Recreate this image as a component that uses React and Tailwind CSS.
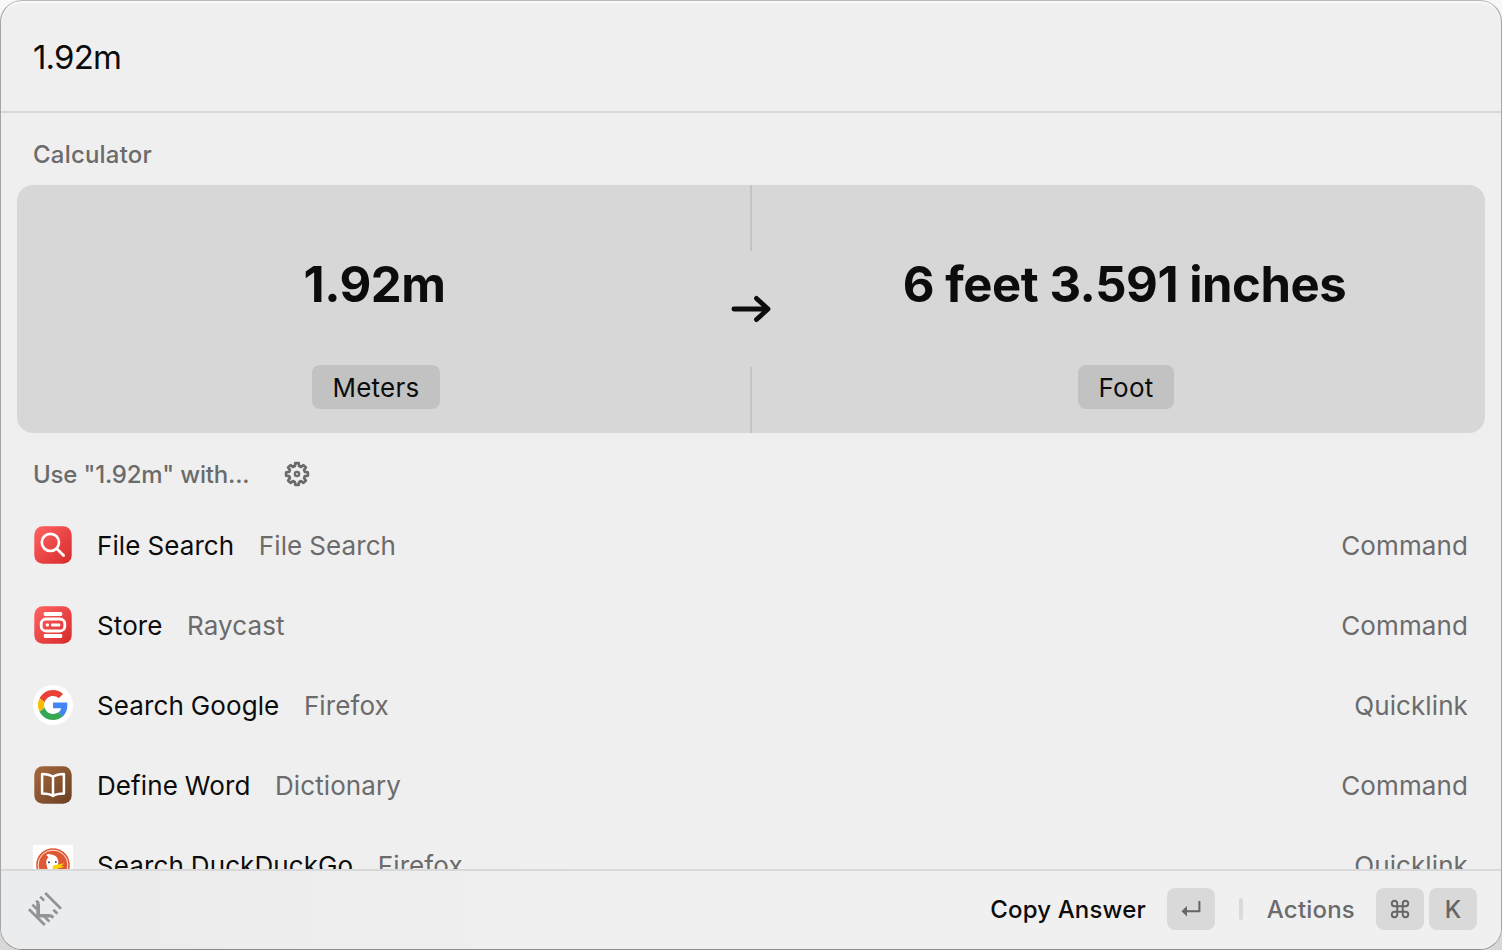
import React from "react";
import { Command } from "lucide-react";

const gearPath = (() => {
  const pts = [];
  const teeth = 8;
  const at = (r, deg) => {
    const a = (deg * Math.PI) / 180;
    return `${(13 + r * Math.cos(a)).toFixed(2)} ${(13 + r * Math.sin(a)).toFixed(2)}`;
  };
  for (let i = 0; i < teeth; i++) {
    const c = i * 45 - 90;
    pts.push(at(8.2, c - 15), at(11, c - 9), at(11, c + 9), at(8.2, c + 15));
  }
  return `M${pts.join("L")}Z`;
})();

function GearIcon() {
  return (
    <svg className="size-[26px]" viewBox="0 0 26 26" fill="none" stroke="currentColor" strokeWidth="2.7" strokeLinejoin="round">
      <path d={gearPath} />
      <circle cx="13" cy="13" r="2.1" strokeWidth="2.4" />
    </svg>
  );
}

function ArrowIcon() {
  return (
    <svg className="h-[28px] w-[40px] shrink-0" viewBox="0 0 40 28" fill="none" stroke="#0c0c0c" strokeWidth="4.8" strokeLinecap="round" strokeLinejoin="round">
      <path d="M2.9 14H37M25.5 3.4L37 14L25.5 24.6" />
    </svg>
  );
}

function FileSearchIcon() {
  return (
    <svg className="size-10" viewBox="0 0 40 40" fill="none">
      <defs>
        <linearGradient id="red-a" x1="0" y1="0" x2="1" y2="1">
          <stop offset="0" stopColor="#ff6363" />
          <stop offset="1" stopColor="#d72a2a" />
        </linearGradient>
      </defs>
      <rect x="1.3" y="1.3" width="37.4" height="37.4" rx="8.5" fill="url(#red-a)" />
      <circle cx="17.4" cy="17.4" r="8.6" stroke="#fff" strokeWidth="2.7" />
      <path d="M23.8 23.8L30.6 30.6" stroke="#fff" strokeWidth="2.8" strokeLinecap="round" />
    </svg>
  );
}

function StoreIcon() {
  return (
    <svg className="size-10" viewBox="0 0 40 40" fill="none">
      <defs>
        <linearGradient id="red-b" x1="0" y1="0" x2="1" y2="1">
          <stop offset="0" stopColor="#ff6363" />
          <stop offset="1" stopColor="#d72a2a" />
        </linearGradient>
      </defs>
      <rect x="1.3" y="1.3" width="37.4" height="37.4" rx="8.5" fill="url(#red-b)" />
      <rect x="10.7" y="7" width="18.6" height="4" rx="1.4" fill="#fff" />
      <rect x="10.7" y="29" width="18.6" height="4" rx="1.4" fill="#fff" />
      <rect x="8.2" y="14" width="23.6" height="12" rx="4.8" stroke="#fff" strokeWidth="2.8" />
      <rect x="12.8" y="18.6" width="3.2" height="2.8" rx="1" fill="#fff" />
      <rect x="18" y="18.6" width="9.4" height="2.8" rx="1.1" fill="#fff" />
    </svg>
  );
}

function GoogleIcon() {
  return (
    <svg className="size-10" viewBox="0 0 40 40">
      <circle cx="20" cy="20" r="20" fill="#fff" />
      <g transform="translate(5 5) scale(0.625)">
        <path fill="#EA4335" d="M24 9.5c3.54 0 6.71 1.22 9.21 3.6l6.85-6.85C35.9 2.38 30.47 0 24 0 14.62 0 6.51 5.38 2.56 13.22l7.98 6.19C12.43 13.72 17.74 9.5 24 9.5z" />
        <path fill="#4285F4" d="M46.98 24.55c0-1.57-.15-3.09-.38-4.55H24v9.02h12.94c-.58 2.96-2.26 5.48-4.78 7.18l7.73 6c4.51-4.18 7.09-10.36 7.09-17.65z" />
        <path fill="#FBBC05" d="M10.53 28.59c-.48-1.45-.76-2.99-.76-4.59s.27-3.14.76-4.59l-7.98-6.19C.92 16.46 0 20.12 0 24c0 3.88.92 7.54 2.56 10.78l7.97-6.19z" />
        <path fill="#34A853" d="M24 48c6.48 0 11.93-2.13 15.89-5.81l-7.73-6c-2.15 1.45-4.92 2.3-8.16 2.3-6.26 0-11.57-4.22-13.47-9.91l-7.98 6.19C6.51 42.62 14.62 48 24 48z" />
      </g>
    </svg>
  );
}

function DictionaryIcon() {
  return (
    <svg className="size-10" viewBox="0 0 40 40" fill="none">
      <defs>
        <linearGradient id="brown" x1="0" y1="0" x2="1" y2="1">
          <stop offset="0" stopColor="#a5683e" />
          <stop offset="1" stopColor="#6b4023" />
        </linearGradient>
      </defs>
      <rect x="1.3" y="1.3" width="37.4" height="37.4" rx="8.5" fill="url(#brown)" />
      <path d="M20 11.8C17.2 9.8 13.2 9 9.1 9V28.6C13.2 28.6 17.2 29.2 20 31C22.8 29.2 26.8 28.6 30.9 28.6V9C26.8 9 22.8 9.8 20 11.8ZM20 11.8V31" stroke="#fff" strokeWidth="2.5" strokeLinejoin="round" />
    </svg>
  );
}

function DuckIcon() {
  return (
    <svg className="size-10" viewBox="0 0 40 40" fill="none">
      <rect width="40" height="40" fill="#fff" />
      <circle cx="20" cy="20" r="16.8" fill="#de5833" />
      <circle cx="20" cy="20" r="14.9" stroke="#fff" strokeWidth="0.9" />
      <path d="M13.2 10.2C14.2 9 16 8.8 17.3 9.6C21.5 9.6 25 12 25.3 16.5C25.5 19 24.5 21 24 24L25 34H17.5C16 28 13.4 21 13.2 17.5C13.1 15 14.2 13.2 15.6 12.4C15 11.5 14.2 10.8 13.2 10.2Z" fill="#fff" />
      <circle cx="16" cy="17.3" r="1.1" fill="#2d4f8e" />
      <circle cx="22.8" cy="17" r="1" fill="#2d4f8e" />
      <path d="M19.8 21.2C21 19.6 25 19.8 30.5 18.2C31.3 18.4 30 19.8 28 20.5C26.8 21 30 21 31 21.2C29.8 22.8 25 23.6 20.5 24C19.4 23.3 19.3 22 19.8 21.2Z" fill="#fdd20a" />
    </svg>
  );
}

function RaycastMark() {
  return (
    <svg className="size-[34px]" viewBox="0 0 34 34" fill="none">
      <path
        d="M1 17.2L16.8 33M17.2 1L33 16.8M4.4 12.6L9.4 17.6M8.2 8.6L11 11.4M12.2 4.6L16.2 8.6M21.4 29.6L16.4 24.6M25.4 25.8L22.6 23M29.4 21.8L25.4 17.8"
        stroke="#929394"
        strokeWidth="2.7"
      />
      <path d="M8.3 8.8L12 12V22H22L25.2 25.4H18L8.3 25.4Z" fill="#929394" />
    </svg>
  );
}

function ReturnIcon() {
  return (
    <svg className="h-4 w-5" viewBox="0 0 20 16" fill="none">
      <path d="M18.4 0V10.3H4" stroke="#666" strokeWidth="2" />
      <path d="M0.5 10.3L6 5V15.6Z" fill="#666" />
    </svg>
  );
}

const rows = [
  { icon: FileSearchIcon, title: "File Search", source: "File Search", kind: "Command" },
  { icon: StoreIcon, title: "Store", source: "Raycast", kind: "Command" },
  { icon: GoogleIcon, title: "Search Google", source: "Firefox", kind: "Quicklink" },
  { icon: DictionaryIcon, title: "Define Word", source: "Dictionary", kind: "Command" },
  { icon: DuckIcon, title: "Search DuckDuckGo", source: "Firefox", kind: "Quicklink" },
];

function ResultRow({ icon: Icon, title, source, kind }) {
  return (
    <li className="flex h-20 shrink-0 items-center pr-[33px] pl-8 text-[26px] tracking-[0.1px] [word-spacing:-0.5px]">
      <Icon />
      <span className="ml-6 text-[#0c0c0c]">{title}</span>
      <span className="ml-[24.5px] text-[#6b6b6b]">{source}</span>
      <span className="ml-auto text-[#6b6b6b]">{kind}</span>
    </li>
  );
}

function Quantity({ value, unit }) {
  return (
    <div className="flex flex-1 flex-col items-center pt-[68px]">
      <div className="pr-[3px] text-[49px] leading-[64px] font-bold tracking-[-0.45px] whitespace-nowrap">{value}</div>
      <div className="mt-12 flex h-11 items-center rounded-lg bg-[#c2c2c2] px-5 text-[26px] tracking-[0.25px]">{unit}</div>
    </div>
  );
}

function Key({ children }) {
  return <kbd className="flex h-[42px] w-12 items-center justify-center rounded-lg bg-[#d9d9d9] font-['Inter',sans-serif] text-2xl text-[#666]">{children}</kbd>;
}

export default function App() {
  return (
    <div className="h-[950px] w-[1502px] overflow-hidden bg-linear-to-b from-[#f8f8f8] to-[#d8d8d8] font-['Inter',sans-serif] text-[#0c0c0c]">
      <div className="flex h-full flex-col overflow-hidden rounded-[22px] border border-t-[#b9b9b9] border-r-[#a5a5a5] border-b-[#8c8c8c] border-l-[#a5a5a5] bg-[#efefef] shadow-[inset_0_2px_1px_#fafafa]">
        <header className="flex h-[112px] shrink-0 items-center border-b-2 border-[#d8d8d8] px-8 pt-[3px] text-[33px] tracking-[-0.8px]">1.92m</header>
        <main className="flex min-h-0 flex-1 flex-col overflow-hidden">
          <h2 className="flex h-[72px] shrink-0 items-center px-8 pt-3 text-2xl font-medium tracking-[0.2px] text-[#6b6b6b]">Calculator</h2>
          <section className="mx-4 flex h-[248px] shrink-0 rounded-2xl bg-[#d7d7d7]">
            <Quantity value="1.92m" unit="Meters" />
            <div className="flex w-8 shrink-0 flex-col items-center justify-between">
              <div className="h-[66px] w-0.5 bg-[#c3c3c3]" />
              <ArrowIcon />
              <div className="h-[66px] w-0.5 bg-[#c3c3c3]" />
            </div>
            <Quantity value="6 feet 3.591 inches" unit="Foot" />
          </section>
          <h2 className="flex h-[72px] shrink-0 items-center gap-[35px] px-8 pt-2.5 text-2xl font-medium tracking-[-0.18px] text-[#6b6b6b]">
            <span className="pt-0.5">Use "1.92m" with...</span>
            <GearIcon />
          </h2>
          <ul className="flex flex-col">
            {rows.map((row) => (
              <ResultRow key={row.title} {...row} />
            ))}
          </ul>
        </main>
        <footer className="flex h-20 shrink-0 items-center border-t-2 border-[#d8d8d8] bg-linear-to-r from-[#eaecee] via-[#ececed] via-10% to-[#f0f0f0] to-40% pr-6 pb-0.5 pl-[27px] text-2xl font-medium tracking-[0.15px]">
          <RaycastMark />
          <span className="ml-auto pt-0.5">Copy Answer</span>
          <div className="ml-[21px]"><Key><ReturnIcon /></Key></div>
          <div className="ml-6 h-[22px] w-1 rounded-full bg-[#dadada]" />
          <span className="ml-6 pt-0.5 tracking-[0.2px] text-[#6b6b6b]">Actions</span>
          <div className="ml-[21px] flex gap-[5px]">
            <Key><Command size={22} strokeWidth={2.1} /></Key>
            <Key><span className="pt-0.5">K</span></Key>
          </div>
        </footer>
      </div>
    </div>
  );
}
